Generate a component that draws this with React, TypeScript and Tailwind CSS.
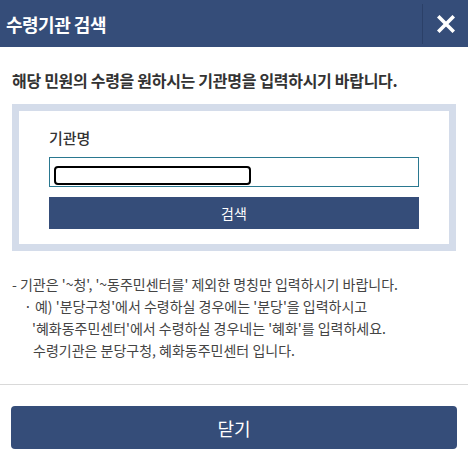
import React from "react";

export default function App() {
  return (
    <div
      className="w-[468px] h-[456px] bg-white flex flex-col overflow-hidden"
      style={{ fontFamily: '"Noto Sans CJK KR", "Noto Sans", sans-serif' }}
    >
      <div className="h-[47px] bg-[#354d79] flex items-center shrink-0">
        <div className="flex-1 pl-[6px] text-white text-[18px] font-bold tracking-[-0.5px] leading-none">
          수령기관 검색
        </div>
        <div className="w-px h-[40px] bg-[#2b4068]" />
        <div className="w-[45px] h-full flex items-center justify-center">
          <svg width="18" height="18" viewBox="0 0 18 18">
            <path d="M2.5 2.5 L15.5 15.5 M15.5 2.5 L2.5 15.5" stroke="white" strokeWidth="3.6" strokeLinecap="square" />
          </svg>
        </div>
      </div>

      <div className="px-[12px] pt-[22px]">
        <div className="text-[16px] font-bold text-[#333] leading-[22px] tracking-[-0.3px]">
          해당 민원의 수령을 원하시는 기관명을 입력하시기 바랍니다.
        </div>

        <div className="mt-[13px] border-[7px] border-[#d4dcea] h-[147px] pl-[30px] pr-[30px] pt-[16px]">
          <div className="text-[15px] font-medium text-[#333] leading-[22px]">기관명</div>
          <div className="mt-[8px] h-[30px] border border-[#2a7890] flex items-center pl-[4px]">
            <div className="w-[197px] h-[19px] border-2 border-black rounded-[4px] mt-[6px]" />
          </div>
          <div className="mt-[10px] h-[32px] bg-[#354d79] flex items-center justify-center text-white text-[14px] leading-none">
            검색
          </div>
        </div>

        <div className="mt-[22px] text-[14px] text-[#444] leading-[22px]">
          <div>- 기관은 '~청', '~동주민센터를' 제외한 명칭만 입력하시기 바랍니다.</div>
          <div className="pl-[12px]">· 예) '분당구청'에서 수령하실 경우에는 '분당'을 입력하시고</div>
          <div className="pl-[20px]">'혜화동주민센터'에서 수령하실 경우네는 '혜화'를 입력하세요.</div>
          <div className="pl-[21px]">수령기관은 분당구청, 혜화동주민센터 입니다.</div>
        </div>
      </div>

      <div className="mt-[23px] h-px bg-[#d9d9d9]" />

      <div className="px-[11px] pt-[21px]">
        <div className="h-[43px] rounded-[4px] bg-[#354d79] flex items-center justify-center text-white text-[18px] leading-none">
          닫기
        </div>
      </div>
    </div>
  );
}
